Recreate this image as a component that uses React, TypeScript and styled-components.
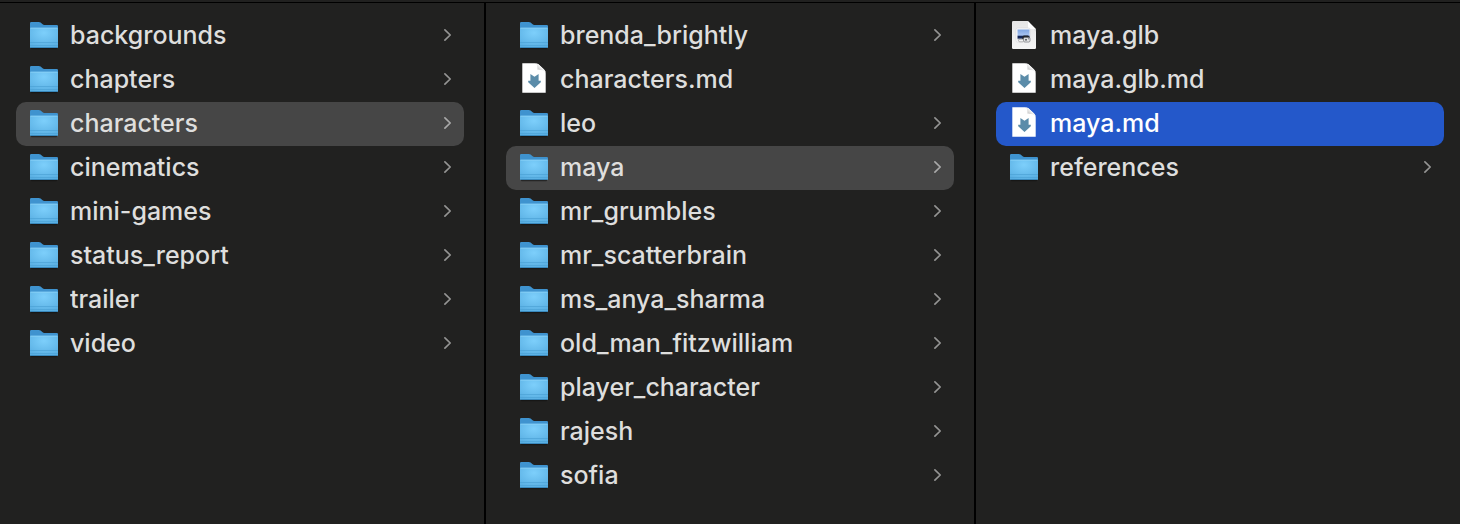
import React from 'react';
import styled, { createGlobalStyle } from 'styled-components';

const GlobalStyle = createGlobalStyle`
  * { box-sizing: border-box; }
  body {
    margin: 0;
    background: #212120;
    color: #dededd;
    font-family: Inter, "Liberation Sans", sans-serif;
  }
`;

const Browser = styled.main`
  display: flex;
  flex-direction: column;
  min-height: 100vh;
  padding-top: 2px;
`;

const Columns = styled.div`
  display: flex;
  flex: 1;
  border-top: 1px solid #000;
`;

const Column = styled.ul`
  box-sizing: content-box;
  flex: 1 1 0;
  min-width: 0;
  margin: 0;
  padding: 11px 20px;
  list-style: none;

  &:first-child { padding-left: 16px; }
  &:last-child { padding-right: 16px; }
  &:not(:last-child) { border-right: 2px solid #000; }
`;

type Highlight = 'none' | 'path' | 'active';

const fills: Record<Highlight, string> = {
  none: 'transparent',
  path: '#464646',
  active: '#2458ca',
};

const Row = styled.button<{ $highlight: Highlight }>`
  display: flex;
  align-items: center;
  gap: 12px;
  width: 100%;
  height: 44px;
  padding: 0 12px 0 14px;
  border: 0;
  border-radius: 10px;
  background: ${({ $highlight }) => fills[$highlight]};
  color: ${({ $highlight }) => ($highlight === 'active' ? '#fff' : 'inherit')};
  font: inherit;
  font-size: 25px;
  font-weight: 500;
  line-height: 32px;
  text-align: left;
`;

const Name = styled.span`
  flex: 1;
  min-width: 0;
  overflow: hidden;
  text-overflow: ellipsis;
  white-space: nowrap;
  padding-bottom: 2px;
`;

const Icon = styled.svg`
  flex: none;
  width: 28px;
  height: 34px;
`;

const ChevronIcon = styled.svg<{ $bright: boolean }>`
  flex: none;
  width: 9px;
  height: 14px;
  margin-bottom: 2px;
  fill: none;
  stroke: ${({ $bright }) => ($bright ? '#a9a9a9' : '#949493')};
  stroke-width: 1.7;
  stroke-linecap: round;
  stroke-linejoin: round;
`;

const PaintStore = styled.svg`
  display: block;
`;

const FolderIcon = () => (
  <Icon viewBox="0 0 28 34" aria-hidden="true">
    <path d="M1 28.500h26v.8q0 .9-.8.9H1.8q-.8 0-.8-.9z" fill="#111" opacity=".6" />
    <path d="M0 4.200Q0 3 1.200 3h7.600q1 0 1.800.6l2 1.700q.7.600 1.700.6h12.500Q28 5.900 28 7.100V12H0z" fill="#3f93cf" />
    <path d="M0 9.700Q0 8.800.9 8.800h26.200q.9 0 .9.900V28q0 1-1 1H1q-1 0-1-1z" fill="url(#folderFront)" />
    <path d="M.4 9.200h27.200" stroke="#8dd4f9" strokeWidth=".8" />
    <path d="M0 23.500h28M0 26.500h28" stroke="#4ca2d5" strokeWidth=".7" />
    <path d="M.5 28.500h27" stroke="#3583b7" strokeWidth=".9" />
  </Icon>
);

const MarkdownIcon = () => (
  <Icon viewBox="0 0 28 34" aria-hidden="true">
    <path d="M2.300.3h12.700c2 0 3.200.7 4.500 1.900l4.300 4c1.300 1.200 1.900 2.400 1.900 4.200v19.400H2.300z" fill="#fff" />
    <path d="M15.600.4c1.700.8 2 3 1.700 6.400 3.700-.2 7.200.3 8.300 2.700-.2-1.300-.8-2.300-1.800-3.300l-4.300-4C18.300 1.100 17.300.5 15.600.4z" fill="url(#pageCurl)" />
    <path d="M10.400 11l4.100 2.700L18.600 11v6.800h2.200v1.500l-6.300 5.600-6.300-5.600v-1.500h2.200z" fill="#5b8ca9" />
  </Icon>
);

const ModelIcon = () => (
  <Icon viewBox="0 0 28 34" aria-hidden="true">
    <path d="M3.200 2h14.600L26 10.200v18.600q0 1.200-1.200 1.200H3.200Q2 30 2 28.800V3.200Q2 2 3.200 2z" fill="url(#modelPage)" />
    <path d="M17.800 2.200v6.600q0 1.400 1.400 1.400H26v2.500L17 3z" fill="#999" opacity=".25" />
    <path d="M17.800 2v6.800q0 1.400 1.400 1.400H26z" fill="#fff" />
    <rect x="6" y="9" width="14" height="14" rx="1.500" fill="#fafafa" stroke="#d3d3d6" strokeWidth=".5" />
    <path d="M7.500 10.500h12V17h-12z" fill="url(#modelSky)" />
    <path d="M7.500 16.700h12v3.100h-12z" fill="#13265a" />
    <path d="M7.500 19.800h12v1.700h-12z" fill="#d0d2d5" />
    <path d="M12.200 17.800l1.500-1.400h4.200l1.600 1.600v2.200h-7.300z" fill="#23272e" />
    <rect x="8.600" y="20.200" width="5" height="2.600" rx="1.200" fill="#f4f4f4" stroke="#88888c" strokeWidth=".6" />
    <rect x="13.600" y="18.400" width="6.400" height="4.600" rx="1.300" fill="#e6e6e7" stroke="#66696e" strokeWidth=".6" />
    <circle cx="16" cy="20.700" r="1" fill="#5c5f66" />
    <circle cx="18.500" cy="19.800" r=".7" fill="#8b8e95" />
  </Icon>
);

const IconPaints = () => (
  <PaintStore width="0" height="0" aria-hidden="true">
    <defs>
      <linearGradient id="pageCurl" x1="0" y1="1" x2="1" y2="0">
        <stop offset="0" stopColor="#fff" />
        <stop offset=".35" stopColor="#d2d2d2" />
        <stop offset=".65" stopColor="#fff" />
      </linearGradient>
      <radialGradient id="folderFront" cx=".5" cy=".25" r=".8">
        <stop offset="0" stopColor="#7dcffb" />
        <stop offset="1" stopColor="#58aee2" />
      </radialGradient>
      <linearGradient id="modelPage" x1="0" y1="0" x2="0" y2="1">
        <stop offset="0" stopColor="#e6e6e6" />
        <stop offset="1" stopColor="#f5f5f5" />
      </linearGradient>
      <linearGradient id="modelSky" x1="0" y1="0" x2="0" y2="1">
        <stop offset="0" stopColor="#7fa5e2" />
        <stop offset="1" stopColor="#adc7f2" />
      </linearGradient>
    </defs>
  </PaintStore>
);

type Kind = 'folder' | 'markdown' | 'model';

const icons: Record<Kind, React.FC> = {
  folder: FolderIcon,
  markdown: MarkdownIcon,
  model: ModelIcon,
};

interface Entry {
  name: string;
  kind?: Kind;
  highlight?: Highlight;
}

const columns: Entry[][] = [
  [
    { name: 'backgrounds' },
    { name: 'chapters' },
    { name: 'characters', highlight: 'path' },
    { name: 'cinematics' },
    { name: 'mini-games' },
    { name: 'status_report' },
    { name: 'trailer' },
    { name: 'video' },
  ],
  [
    { name: 'brenda_brightly' },
    { name: 'characters.md', kind: 'markdown' },
    { name: 'leo' },
    { name: 'maya', highlight: 'path' },
    { name: 'mr_grumbles' },
    { name: 'mr_scatterbrain' },
    { name: 'ms_anya_sharma' },
    { name: 'old_man_fitzwilliam' },
    { name: 'player_character' },
    { name: 'rajesh' },
    { name: 'sofia' },
  ],
  [
    { name: 'maya.glb', kind: 'model' },
    { name: 'maya.glb.md', kind: 'markdown' },
    { name: 'maya.md', kind: 'markdown', highlight: 'active' },
    { name: 'references' },
  ],
];

const EntryRow = ({ name, kind = 'folder', highlight = 'none' }: Entry) => {
  const KindIcon = icons[kind];
  return (
    <li>
      <Row type="button" $highlight={highlight} aria-current={highlight !== 'none' || undefined}>
        <KindIcon />
        <Name>{name}</Name>
        {kind === 'folder' && (
          <ChevronIcon viewBox="0 0 9 14" $bright={highlight === 'path'} aria-hidden="true">
            <path d="M1.900 1.900L7.200 7L1.900 12.100" />
          </ChevronIcon>
        )}
      </Row>
    </li>
  );
};

export default function App() {
  return (
    <Browser>
      <GlobalStyle />
      <Columns>
        {columns.map((entries) => (
          <Column key={entries[0].name}>
            {entries.map((entry) => (
              <EntryRow key={entry.name} {...entry} />
            ))}
          </Column>
        ))}
      </Columns>
      <IconPaints />
    </Browser>
  );
}
